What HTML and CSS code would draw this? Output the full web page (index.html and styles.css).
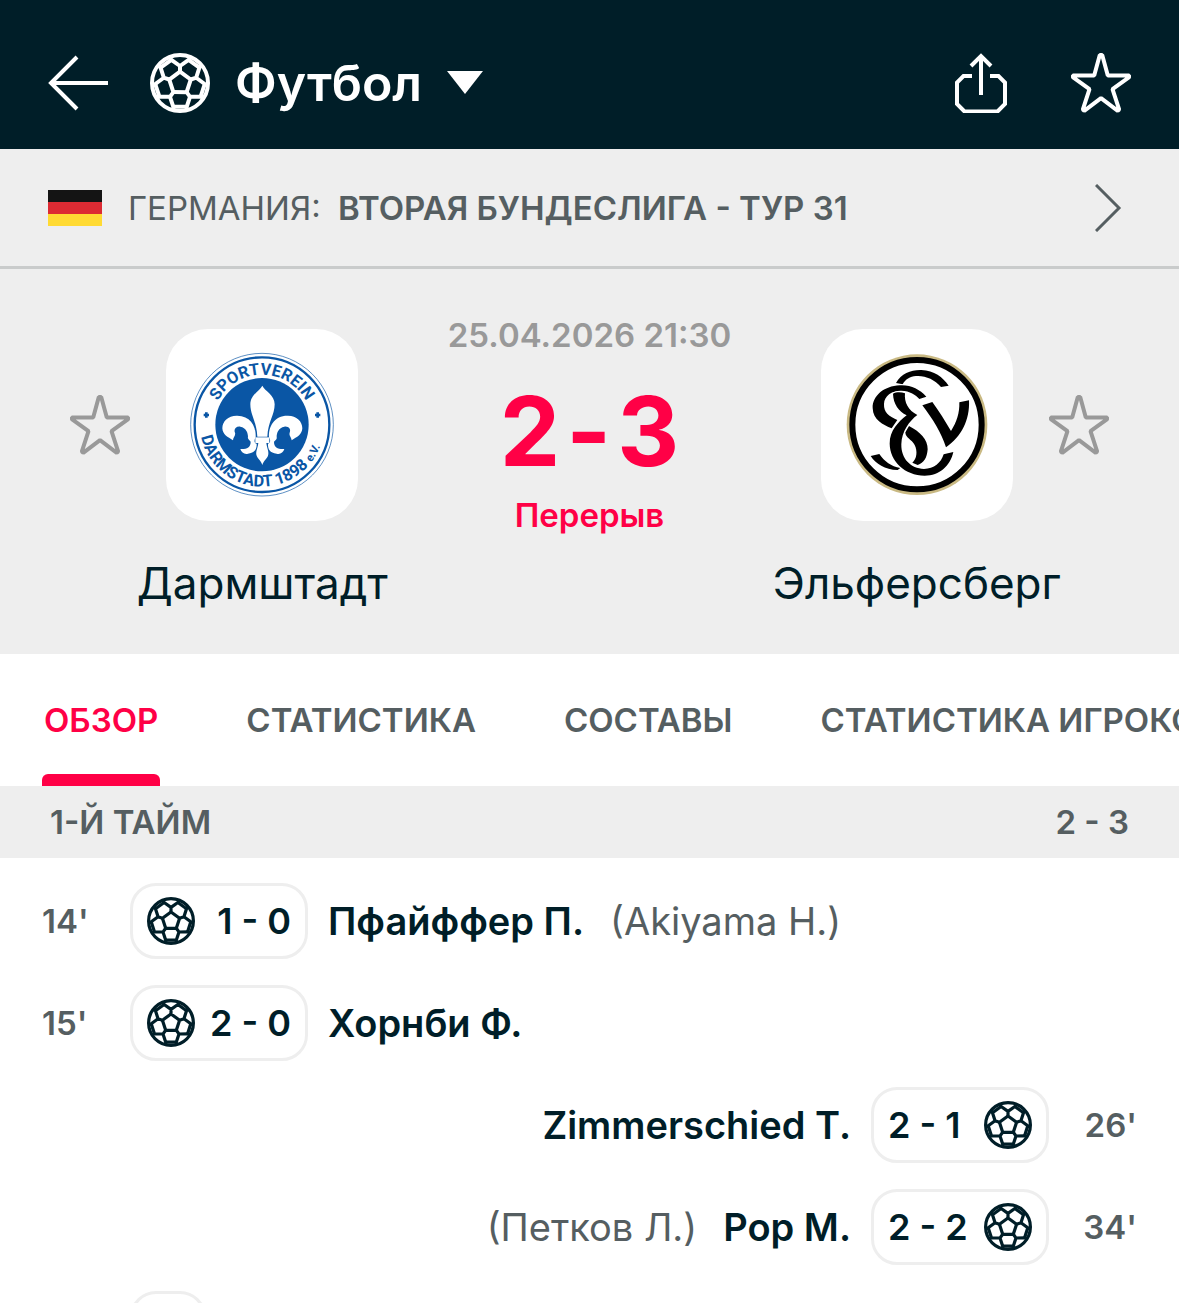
FILE: index.html
```html
<!DOCTYPE html>
<html lang="ru">
<head>
    <meta charset="UTF-8">
    <meta name="viewport" content="width=device-width, initial-scale=1.0">
    <title>Дармштадт - Эльферсберг</title>
    <link rel="stylesheet" href="styles.css">
</head>
<body>
    <!-- Shared icons -->
    <svg class="sprite" aria-hidden="true">
        <symbol id="ball" viewBox="-30 -30 60 60">
            <g fill="none" stroke="currentColor" stroke-width="4" stroke-linejoin="round">
                <circle r="28"/>
                <path id="panel" d="M0-18V-11.3L10.7-3.5M-11-26.2L-8.6-23.2L0-17L8.6-23.2L11-26.2M8.6-23.2L19.4-15.4"/>
                <use href="#panel" transform="rotate(72)"/>
                <use href="#panel" transform="rotate(144)"/>
                <use href="#panel" transform="rotate(216)"/>
                <use href="#panel" transform="rotate(288)"/>
            </g>
        </symbol>
        <symbol id="star" viewBox="0 0 60 60">
            <path d="M28.8 2h2.400l5.600 20.500h21.400v1.600L41.500 36.200l6.700 20.400l-1.400 1.200L30 45.200L13.200 57.800l-1.400-1.200l6.700-20.400L1.800 24.100v-1.600h21.400z" fill="none" stroke="currentColor" stroke-width="4" stroke-linejoin="bevel"/>
        </symbol>
    </svg>

    <header class="topbar">
        <button class="icon-btn" aria-label="Назад">
            <svg width="60" height="60" viewBox="0 0 60 60" fill="none" stroke="currentColor" stroke-width="4"><path d="M60 30H3M29 4L3 30l26 26"/></svg>
        </button>
        <button class="sport">
            <svg width="60" height="60"><use href="#ball"/></svg>
            <span>Футбол</span>
            <svg width="36" height="24" viewBox="0 0 36 24"><path d="M0 0h36L18 23z" fill="currentColor"/></svg>
        </button>
        <div class="actions">
            <button class="icon-btn" aria-label="Поделиться">
                <svg width="54" height="60" viewBox="0 0 54 60" fill="none" stroke="currentColor" stroke-width="4"><path d="M18 23H9.500L3 29.500V51l7.500 7.500h33L51 51V29.500L44.500 23H36M27 42V3M17 13L27 3l10 10"/></svg>
            </button>
            <button class="icon-btn" aria-label="В избранное">
                <svg width="60" height="60"><use href="#star"/></svg>
            </button>
        </div>
    </header>

    <a class="league" href="#">
        <svg width="54" height="36" viewBox="0 0 54 36"><path d="M0 0h54v12H0z" fill="#141414"/><path d="M0 12h54v12H0z" fill="#dc2b33"/><path d="M0 24h54v12H0z" fill="#ffda33"/></svg>
        <span class="league-name">ГЕРМАНИЯ: <b>ВТОРАЯ БУНДЕСЛИГА - ТУР 31</b></span>
        <svg width="28" height="48" viewBox="0 0 28 48" fill="none" stroke="currentColor" stroke-width="3"><path d="M1 1l23 23L1 47"/></svg>
    </a>

    <section class="match">
        <div class="team">
            <button class="fav" aria-label="Дармштадт в избранное"><svg width="60" height="60"><use href="#star"/></svg></button>
            <div class="crest">
                <svg viewBox="48 27 576 576">
                    <defs>
                        <path id="arcTop" d="M186 314a150 150 0 0 1 300 0"/>
                        <path id="arcBottom" d="M150 314a186 186 0 0 0 372 0"/>
                    </defs>
                    <g fill="none" stroke="#0a56a5">
                        <circle cx="336" cy="314" r="214" stroke-width="2"/>
                        <circle cx="336" cy="314" r="202" stroke-width="7"/>
                    </g>
                    <circle cx="336" cy="314" r="140" fill="#0a56a5"/>
                    <g class="crest-text" fill="#0a56a5">
                        <text text-anchor="middle"><textPath href="#arcTop" startOffset="50%">SPORTVEREIN</textPath></text>
                        <text><textPath href="#arcBottom" startOffset="36">DARMSTADT 1898 <tspan class="crest-small">e.V.</tspan></textPath></text>
                    </g>
                    <path d="M169 277v16M161 285h16M503 277v16M495 285h16" stroke="#0a56a5" stroke-width="8"/>
                    <g fill="#fff">
                        <path d="M337 197C329 214 301 224 301 253C301 285 320 305 322 350H352C354 305 374 285 374 253C374 224 345 214 337 197Z"/>
                        <path id="petal" d="M317 352C319 318 300 286 260 287C234 287 217 304 217 325C218 344 233 351 249 361C249 353 258 346 255 338C250 327 259 318 271 320C288 323 294 338 294 350C292 356 297 360 302 365C302 383 290 388 271 387C274 398 284 404 294 401C314 398 321 388 320 371C312 370 312 360 317 352Z"/>
                        <use href="#petal" transform="translate(674 0) scale(-1 1)"/>
                        <path d="M325 369H349C351 386 358 396 354 407C350 417 341 421 337 435C333 421 324 417 320 407C316 396 323 386 325 369Z"/>
                        <path d="M316 352h42v17h-42z"/>
                    </g>
                </svg>
            </div>
            <h2>Дармштадт</h2>
        </div>

        <div class="result">
            <time datetime="2026-04-25T21:30">25.04.2026 21:30</time>
            <div class="score"><span>2</span><span>-</span><span>3</span></div>
            <div class="status">Перерыв</div>
        </div>

        <div class="team away">
            <button class="fav" aria-label="Эльферсберг в избранное"><svg width="60" height="60"><use href="#star"/></svg></button>
            <div class="crest">
                <svg viewBox="34 27 576 576">
                    <circle cx="322" cy="314" r="211" fill="#c9b983"/>
                    <circle cx="322" cy="314" r="194" fill="#fff" stroke="#000" stroke-width="18"/>
                    <g class="monogram">
                        <path d="M259 189C275 160 305 149 335 150C374 152 399 171 417 197L394 201C374 178 347 166 319 168C301 169 287 178 279 193Z"/>
                        <path d="M183 408L209 402C225 425 244 439 272 444L264 450C225 449 199 432 183 408Z"/>
                        <path d="M298 318C330 334 355 359 354 388C352 414 343 428 324 435L308 428C322 416 324 393 315 375C306 358 287 354 287 337Z"/>
                        <path d="M350 230C329 207 303 194 270 196C223 198 188 228 189 264C190 300 220 314 246 325L263 300C237 289 222 277 223 252C224 226 248 211 275 212C301 213 318 224 329 237Z"/>
                        <path d="M250 221C260 216 274 216 286 220C283 247 296 272 323 285C300 302 276 334 275 373C274 416 303 446 343 447C373 446 394 429 402 403L431 396C422 437 390 467 345 467C285 466 241 424 240 371C240 331 266 306 291 286C267 274 251 252 250 221Z"/>
                        <path d="M338 256L368 246C388 274 406 302 424 333C441 306 450 279 449 247L478 241C481 301 455 350 409 382C395 338 370 298 338 256Z"/>
                    </g>
                </svg>
            </div>
            <h2>Эльферсберг</h2>
        </div>
    </section>

    <nav class="tabs">
        <button class="tab active">ОБЗОР</button>
        <button class="tab">СТАТИСТИКА</button>
        <button class="tab">СОСТАВЫ</button>
        <button class="tab">СТАТИСТИКА ИГРОКОВ</button>
    </nav>

    <div class="period">
        <span>1-Й ТАЙМ</span>
        <span>2 - 3</span>
    </div>

    <ul class="events">
        <li class="event">
            <span class="minute">14'</span>
            <span class="goal"><svg width="48" height="48"><use href="#ball"/></svg><b>1 - 0</b></span>
            <span class="player">Пфайффер П.</span>
            <span class="assist">(Akiyama H.)</span>
        </li>
        <li class="event">
            <span class="minute">15'</span>
            <span class="goal"><svg width="48" height="48"><use href="#ball"/></svg><b>2 - 0</b></span>
            <span class="player">Хорнби Ф.</span>
        </li>
        <li class="event guest">
            <span class="minute">26'</span>
            <span class="goal"><svg width="48" height="48"><use href="#ball"/></svg><b>2 - 1</b></span>
            <span class="player">Zimmerschied T.</span>
        </li>
        <li class="event guest">
            <span class="minute">34'</span>
            <span class="goal"><svg width="48" height="48"><use href="#ball"/></svg><b>2 - 2</b></span>
            <span class="player">Pop M.</span>
            <span class="assist">(Петков Л.)</span>
        </li>
        <li class="event">
            <span class="minute"></span>
            <span class="goal card"></span>
        </li>
    </ul>
</body>
</html>
```
FILE: styles.css
```css
* {
    box-sizing: border-box;
}
body {
    margin: 0;
    background-color: #fff;
    color: #001e28;
    font-family: Inter, "Open Sans", sans-serif;
    font-size: 33px;
    line-height: 40px;
}
svg {
    display: block;
    flex-shrink: 0;
}
button {
    background: none;
    border: none;
    padding: 0;
    color: inherit;
    font: inherit;
    cursor: pointer;
}
.sprite {
    position: absolute;
    width: 0;
    height: 0;
}

/* Top bar */
.topbar {
    display: flex;
    align-items: center;
    gap: 42px;
    padding: 53px 48px 36px;
    background-color: #001e28;
    color: #fff;
}
.sport {
    display: flex;
    align-items: center;
    gap: 25px;
    font-size: 50px;
    font-weight: 600;
    line-height: 60px;
}
.actions {
    display: flex;
    gap: 63px;
    margin-left: auto;
}

/* League */
.league {
    display: flex;
    align-items: center;
    gap: 26px;
    height: 120px;
    padding: 0 56px 0 48px;
    background-color: #eee;
    border-bottom: 3px solid #c9cbcb;
    color: #555e61;
    text-decoration: none;
    white-space: nowrap;
}
.league-name {
    flex: 1;
}
.league-name b {
    margin-left: 8px;
    font-weight: 600;
}

/* Match */
.match {
    display: grid;
    grid-template-columns: 1fr 270px 1fr;
    padding: 44px 70px 45px;
    background-color: #eee;
}
.team {
    display: grid;
    grid-template-columns: 60px 1fr 60px;
    align-items: center;
    justify-items: center;
    align-content: start;
    row-gap: 36px;
    padding-top: 16px;
}
.fav {
    color: #999;
}
.away .fav {
    grid-column: 3;
}
.crest {
    grid-column: 2;
    grid-row: 1;
    width: 192px;
    height: 192px;
    background-color: #fff;
    border-radius: 42px;
}
.crest-text {
    font-size: 49px;
    font-weight: 700;
    font-family: Roboto, sans-serif;
}
.crest-small {
    font-size: 34px;
}
.monogram {
    stroke: #fff;
    stroke-width: 6px;
    paint-order: stroke;
}
.team h2 {
    grid-column: 1 / -1;
    margin: 0;
    font-size: 44px;
    font-weight: 400;
    line-height: 52px;
}
.result {
    display: flex;
    flex-direction: column;
    align-items: center;
    font-weight: 600;
    white-space: nowrap;
}
.result time {
    padding-top: 2px;
    color: #999;
}
.score {
    display: flex;
    gap: 6px;
    margin: 28px 0 16px;
    color: #ff0046;
    font-size: 96px;
    font-weight: 700;
    line-height: 96px;
}
.status {
    color: #ff0046;
}

/* Tabs */
.tabs {
    display: flex;
    gap: 84px;
    height: 132px;
    padding-left: 42px;
    overflow: hidden;
}
.tab {
    flex-shrink: 0;
    padding: 0 2px;
    color: #555e61;
    font-weight: 600;
}
.tab.active {
    position: relative;
    color: #ff0046;
}
.tab.active::after {
    content: "";
    position: absolute;
    left: 0;
    right: 0;
    bottom: 0;
    height: 12px;
    background-color: #ff0046;
    border-radius: 6px 6px 0 0;
}
.period {
    display: flex;
    justify-content: space-between;
    padding: 16px 50px;
    background-color: #eee;
    color: #555e61;
    font-weight: 600;
}

/* Events */
.events {
    margin: 0;
    padding: 25px 42px;
    list-style: none;
}
.event {
    display: flex;
    align-items: center;
    margin-bottom: 26px;
    font-size: 38px;
}
.guest {
    flex-direction: row-reverse;
}
.minute {
    width: 88px;
    color: #555e61;
    font-size: 33px;
    font-weight: 600;
}
.guest .minute {
    text-align: right;
}
.goal {
    display: flex;
    align-items: center;
    justify-content: space-between;
    width: 178px;
    height: 76px;
    padding: 0 14px;
    border: 3px solid #eee;
    border-radius: 26px;
}
.goal b {
    font-size: 36px;
    font-weight: 600;
}
.guest .goal {
    flex-direction: row-reverse;
}
.goal.card {
    width: 76px;
}
.player {
    margin: 0 20px;
    font-weight: 600;
}
.assist {
    margin: 0 6px;
    color: #555e61;
}
```
